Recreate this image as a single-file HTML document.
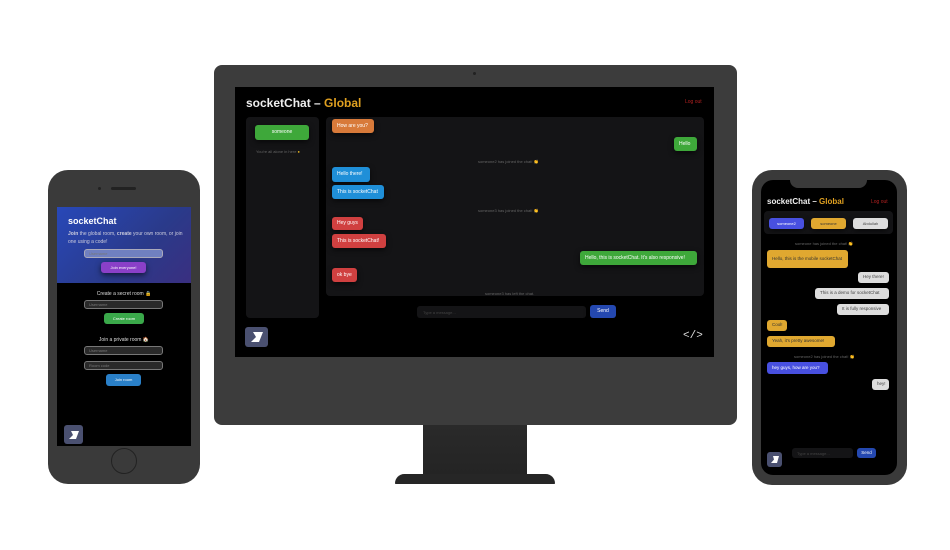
<!DOCTYPE html>
<html><head><meta charset="utf-8"><style>
*{margin:0;padding:0;box-sizing:border-box}
body{width:950px;height:550px;background:#fff;position:relative;overflow:hidden;font-family:"Liberation Sans","DejaVu Sans",sans-serif}
.a{position:absolute}
.b{position:absolute;border-radius:3px;color:#fff;font-size:5px;line-height:1;display:flex;align-items:center;padding-left:5px;white-space:nowrap;box-shadow:0 2px 6px rgba(0,0,0,.6)}
.sys{position:absolute;font-size:4px;color:#666;white-space:nowrap}
.logo{position:absolute;background:#4a5070;border-radius:3px;display:flex;align-items:center;justify-content:center}
.inp{position:absolute;border:1px solid #777;border-radius:3px;background:#2a2a2a;color:#777;font-size:4px;display:flex;align-items:center;padding-left:4px}
</style></head><body>

<!-- Monitor -->
<div class="a" style="left:423px;top:424px;width:104px;height:52px;background:linear-gradient(#2a2a2a,#242424)"></div>
<div class="a" style="left:395px;top:474px;width:160px;height:10px;background:#262626;border-radius:40px 40px 3px 3px"></div>
<div class="a" style="left:214px;top:65px;width:523px;height:360px;background:#3c3c3c;border-radius:8px"></div>
<div class="a" style="left:473px;top:72px;width:3px;height:3px;border-radius:50%;background:#222"></div>
<div class="a" style="left:235px;top:87px;width:479px;height:270px;background:#000"></div>
<div class="a" style="left:246px;top:96px;font-size:12px;color:#eee;font-weight:bold;white-space:nowrap">socketChat – <span style="color:#e0a020">Global</span></div>
<div class="a" style="left:685px;top:99px;font-size:5px;color:#b02020">Log out</div>
<div class="a" style="left:246px;top:117px;width:73px;height:201px;background:#141416;border-radius:4px"></div>
<div class="b" style="left:255px;top:125px;width:54px;height:15px;background:#3ea83a;justify-content:center;padding:0">someone</div>
<div class="sys" style="left:256px;top:149px">You're all alone in here <span style="color:#e0b020">●</span></div>
<div class="a" style="left:326px;top:117px;width:378px;height:179px;background:#141416;border-radius:4px"></div>
<div class="b" style="left:332px;top:119px;width:42px;height:14px;background:#d87a3a">How are you?</div>
<div class="b" style="left:674px;top:137px;width:23px;height:14px;background:#3ea83a">Hello</div>
<div class="sys" style="left:478px;top:159px">someone2 has joined the chat! 👏</div>
<div class="b" style="left:332px;top:167px;width:38px;height:15px;background:#1f8fd8">Hello there!</div>
<div class="b" style="left:332px;top:185px;width:52px;height:14px;background:#1f8fd8">This is socketChat</div>
<div class="sys" style="left:478px;top:208px">someone3 has joined the chat! 👏</div>
<div class="b" style="left:332px;top:217px;width:31px;height:13px;background:#d04040">Hey guys</div>
<div class="b" style="left:332px;top:234px;width:54px;height:14px;background:#d04040">This is socketChat!</div>
<div class="b" style="left:580px;top:251px;width:117px;height:14px;background:#3ea83a">Hello, this is socketChat. It's also responsive!</div>
<div class="b" style="left:332px;top:268px;width:25px;height:14px;background:#d04040">ok bye</div>
<div class="sys" style="left:485px;top:291px">someone3 has left the chat.</div>
<div class="a" style="left:417px;top:306px;width:169px;height:12px;background:#141416;border-radius:3px;font-size:4px;color:#444;padding:4px 6px">Type a message...</div>
<div class="b" style="left:590px;top:305px;width:26px;height:13px;background:#2448b0;justify-content:center;padding:0">Send</div>
<div class="logo" style="left:245px;top:327px;width:23px;height:20px"><svg width="12" height="10"><polygon points="2,0 12,0 8,10 0,10 5,5" fill="#fff"/></svg></div>
<div class="a" style="left:683px;top:330px;font-size:11px;color:#ddd;font-family:'Liberation Mono',monospace">&lt;/&gt;</div>

<!-- Left phone -->
<div class="a" style="left:48px;top:170px;width:152px;height:314px;background:#3a3a3a;border-radius:20px"></div>
<div class="a" style="left:98px;top:187px;width:3px;height:3px;border-radius:50%;background:#222"></div>
<div class="a" style="left:111px;top:187px;width:25px;height:3px;border-radius:2px;background:#222"></div>
<div class="a" style="left:57px;top:207px;width:134px;height:239px;background:#000"></div>
<div class="a" style="left:57px;top:207px;width:134px;height:76px;background:linear-gradient(135deg,#2848b8,#2a3a8a 60%,#3a2f80)"></div>
<div class="a" style="left:68px;top:216px;font-size:9px;color:#fff;font-weight:bold">socketChat</div>
<div class="a" style="left:68px;top:230px;font-size:5px;color:#ccd;line-height:8px;width:118px"><b>Join</b> the global room, <b>create</b> your own room, or join one using a code!</div>
<div class="inp" style="left:84px;top:249px;width:79px;height:9px;background:#7080c0;border-color:#aab">Username</div>
<div class="b" style="left:101px;top:262px;width:45px;height:11px;background:#8a40c8;justify-content:center;padding:0;font-size:4px">Join everyone!</div>
<div class="a" style="left:57px;top:291px;width:134px;text-align:center;font-size:5px;color:#ddd">Create a secret room 🔒</div>
<div class="inp" style="left:84px;top:300px;width:79px;height:9px">Username</div>
<div class="b" style="left:104px;top:313px;width:40px;height:11px;background:#3aa84a;justify-content:center;padding:0;font-size:4px">Create room</div>
<div class="a" style="left:57px;top:337px;width:134px;text-align:center;font-size:5px;color:#ddd">Join a private room 🏠</div>
<div class="inp" style="left:84px;top:346px;width:79px;height:9px">Username</div>
<div class="inp" style="left:84px;top:361px;width:79px;height:9px">Room code</div>
<div class="b" style="left:106px;top:374px;width:35px;height:12px;background:#2a80c8;justify-content:center;padding:0;font-size:4px">Join room</div>
<div class="logo" style="left:64px;top:425px;width:19px;height:19px"><svg width="10" height="8"><polygon points="2,0 10,0 7,8 0,8 4,4" fill="#fff"/></svg></div>
<div class="a" style="left:111px;top:448px;width:26px;height:26px;border-radius:50%;border:1.5px solid #222"></div>

<!-- Right phone -->
<div class="a" style="left:752px;top:170px;width:155px;height:315px;background:#3a3a3a;border-radius:20px"></div>
<div class="a" style="left:761px;top:180px;width:136px;height:295px;background:#000;border-radius:12px"></div>
<div class="a" style="left:790px;top:178px;width:77px;height:10px;background:#3a3a3a;border-radius:0 0 8px 8px"></div>
<div class="a" style="left:767px;top:197px;font-size:8px;color:#eee;font-weight:bold;white-space:nowrap">socketChat – <span style="color:#e0a020">Global</span></div>
<div class="a" style="left:871px;top:199px;font-size:5px;color:#b02020">Log out</div>
<div class="a" style="left:764px;top:211px;width:129px;height:23px;background:#141416;border-radius:4px"></div>
<div class="b" style="left:769px;top:218px;width:35px;height:11px;background:#4850e0;justify-content:center;padding:0;font-size:4px">someone2</div>
<div class="b" style="left:811px;top:218px;width:35px;height:11px;background:#e0a830;color:#333;justify-content:center;padding:0;font-size:4px">someone</div>
<div class="b" style="left:853px;top:218px;width:35px;height:11px;background:#ddd;color:#444;justify-content:center;padding:0;font-size:4px">Abdullah</div>
<div class="sys" style="left:795px;top:241px">someone has joined the chat! 👏</div>
<div class="b" style="left:767px;top:250px;width:81px;height:18px;background:#e0a830;color:#333;white-space:normal;font-size:4.5px;line-height:6px">Hello, this is the mobile socketChat</div>
<div class="b" style="left:858px;top:272px;width:31px;height:11px;background:#ddd;color:#444;font-size:4.5px">Hey there!</div>
<div class="b" style="left:815px;top:288px;width:74px;height:11px;background:#ddd;color:#444;font-size:4.5px">This is a demo for socketChat</div>
<div class="b" style="left:837px;top:304px;width:52px;height:11px;background:#ddd;color:#444;font-size:4.5px">It is fully responsive</div>
<div class="b" style="left:767px;top:320px;width:20px;height:11px;background:#e0a830;color:#333;font-size:4.5px">Cool!</div>
<div class="b" style="left:767px;top:336px;width:68px;height:11px;background:#e0a830;color:#333;font-size:4.5px">Yeah, it's pretty awesome!</div>
<div class="sys" style="left:794px;top:354px">someone2 has joined the chat! 👏</div>
<div class="b" style="left:767px;top:362px;width:61px;height:12px;background:#4850e0;font-size:4.5px">hey guys, how are you?</div>
<div class="b" style="left:872px;top:379px;width:17px;height:11px;background:#ddd;color:#444;font-size:4.5px">hey!</div>
<div class="a" style="left:792px;top:448px;width:61px;height:10px;background:#141416;border-radius:3px;font-size:4px;color:#444;padding:3px 5px">Type a message...</div>
<div class="b" style="left:857px;top:448px;width:19px;height:10px;background:#2448b0;justify-content:center;padding:0;font-size:4.5px">Send</div>
<div class="logo" style="left:767px;top:452px;width:15px;height:15px"><svg width="8" height="7"><polygon points="2,0 8,0 6,7 0,7 3,3.5" fill="#fff"/></svg></div>
</body></html>
